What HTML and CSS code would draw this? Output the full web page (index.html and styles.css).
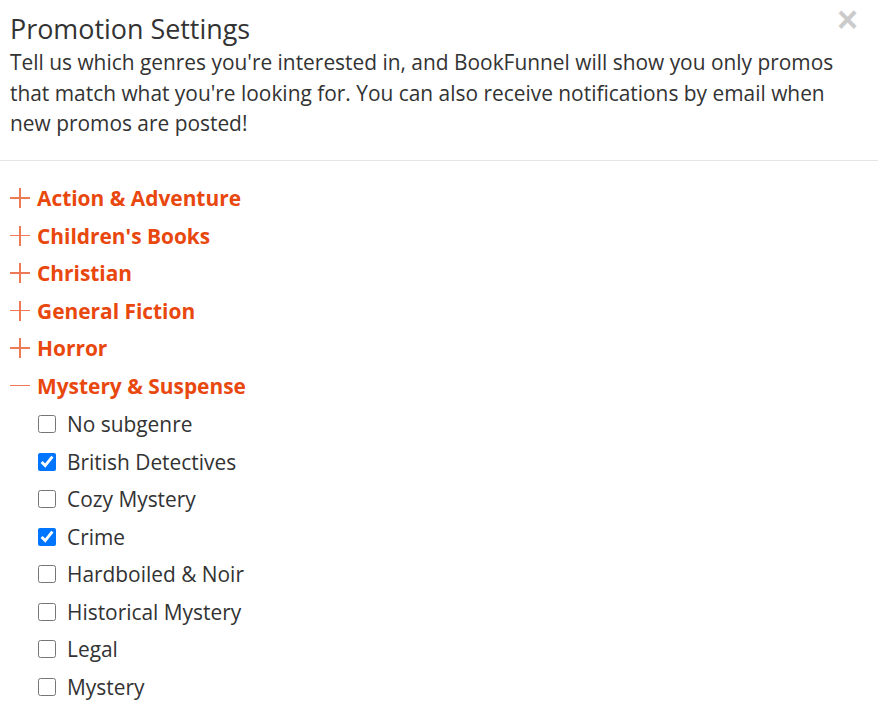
FILE: index.html
```html
<!DOCTYPE html>
<html>
<head>
  <title>Promotion Settings</title>
  <link rel="stylesheet" href="styles.css">
</head>
<body>
  <div class="modal">
    <div class="modal-header">
      <button class="close" type="button">&times;</button>
      <h2 class="modal-title">Promotion Settings</h2>
      <p class="intro">Tell us which genres you're interested in, and BookFunnel will show you only promos that match what you're looking for. You can also receive notifications by email when new promos are posted!</p>
    </div>

    <ul class="genres">
      <li class="genre"><span class="toggle plus"></span>Action &amp; Adventure</li>
      <li class="genre"><span class="toggle plus"></span>Children's Books</li>
      <li class="genre"><span class="toggle plus"></span>Christian</li>
      <li class="genre"><span class="toggle plus"></span>General Fiction</li>
      <li class="genre"><span class="toggle plus"></span>Horror</li>
      <li class="genre open"><span class="toggle minus"></span>Mystery &amp; Suspense</li>
    </ul>

    <ul class="subgenres">
      <li><label><input type="checkbox"> No subgenre</label></li>
      <li><label><input type="checkbox" checked> British Detectives</label></li>
      <li><label><input type="checkbox"> Cozy Mystery</label></li>
      <li><label><input type="checkbox" checked> Crime</label></li>
      <li><label><input type="checkbox"> Hardboiled &amp; Noir</label></li>
      <li><label><input type="checkbox"> Historical Mystery</label></li>
      <li><label><input type="checkbox"> Legal</label></li>
      <li><label><input type="checkbox"> Mystery</label></li>
    </ul>
  </div>
</body>
</html>
```

FILE: styles.css
```css
body {
  margin: 0;
  padding: 0;
  background-color: #fff;
  font-family: "Open Sans", Arial, sans-serif;
  color: #333;
}

.modal {
  width: 878px;
}

.modal-header {
  position: relative;
  padding: 11px 10px 21px 10px;
  border-bottom: 1px solid #e5e5e5;
}

.modal-title {
  margin: 0;
  font-size: 26.9px;
  font-weight: 400;
  line-height: 36px;
}

.intro {
  margin: 0;
  font-size: 20.9px;
  line-height: 30.5px;
}

.close {
  position: absolute;
  top: 2px;
  right: 18px;
  border: none;
  background: none;
  padding: 2px;
  font-family: Arial, sans-serif;
  font-size: 36px;
  font-weight: 700;
  line-height: 32px;
  color: #000;
  opacity: 0.2;
  cursor: pointer;
}

.genres {
  list-style-type: none;
  margin: 0;
  padding: 19px 0 0 10px;
}

.genre {
  display: flex;
  align-items: center;
  height: 37.5px;
  font-size: 20.9px;
  font-weight: 700;
  color: #e8470e;
}

.toggle {
  position: relative;
  width: 20px;
  height: 20px;
  margin-right: 7px;
}

.toggle::before,
.toggle::after {
  content: "";
  position: absolute;
  background-color: #ee7a55;
}

.toggle::before {
  left: 0;
  top: 9px;
  width: 20px;
  height: 1.5px;
}

.plus::after {
  left: 9px;
  top: 0;
  width: 1.5px;
  height: 20px;
}

.subgenres {
  list-style-type: none;
  margin: 0;
  padding: 1px 0 0 37px;
}

.subgenres li {
  display: flex;
  align-items: center;
  height: 37.5px;
  font-size: 20.9px;
}

.subgenres label {
  display: flex;
  align-items: center;
}

.subgenres input[type="checkbox"] {
  width: 18px;
  height: 18px;
  margin: 0 11px 0 1px;
}
```
